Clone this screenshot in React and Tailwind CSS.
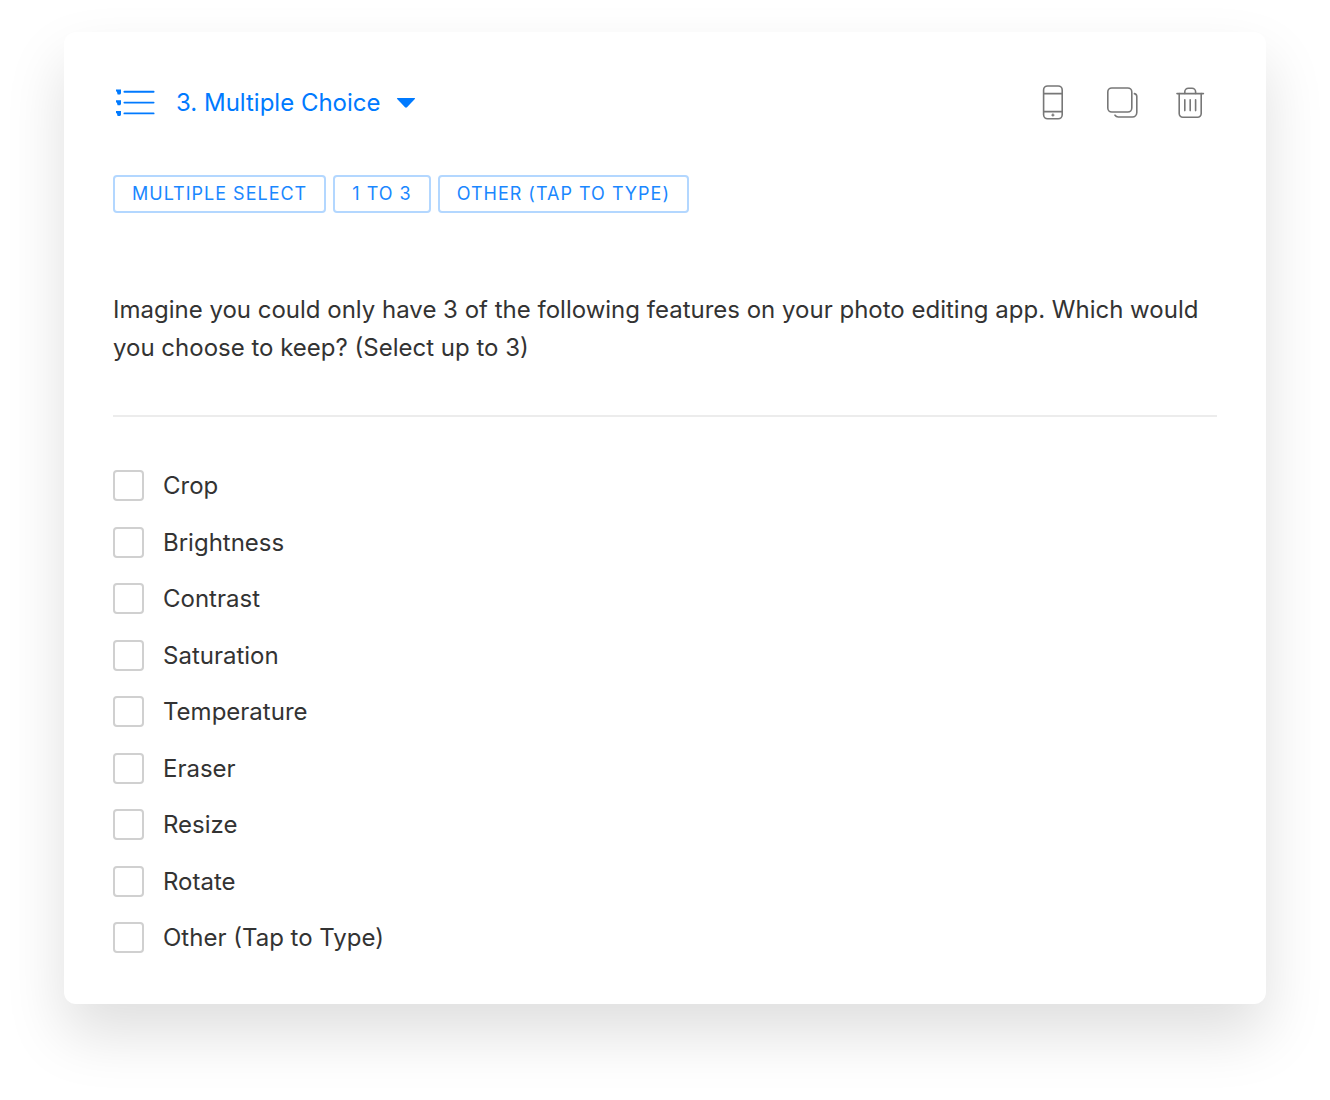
// App.jsx
const tags = ['Multiple Select', '1 to 3', 'Other (Tap to Type)'];

const options = [
  'Crop',
  'Brightness',
  'Contrast',
  'Saturation',
  'Temperature',
  'Eraser',
  'Resize',
  'Rotate',
  'Other (Tap to Type)',
];

function ListIcon() {
  return (
    <svg className="w-10 h-7 flex-shrink-0" viewBox="0 0 40 28" fill="currentColor" aria-hidden="true">
      <path d="M1 0.4h5v3.8L5.2 5.4H2.6L1.8 2.6H1zM1 11.2h5V15l-.8 1.2H2.6l-.8-2.8H1zM1 22h5v3.8L5.2 27H2.6l-.8-2.8H1z" />
      <path d="M9.4 2.7h29.2M9.4 13.6h29.2M9.4 24.4h29.2" stroke="currentColor" strokeWidth="1.9" strokeLinecap="round" />
    </svg>
  );
}

function PhoneIcon() {
  return (
    <svg className="w-8 h-9" viewBox="0 0 32 36" fill="none" stroke="currentColor" strokeWidth="1.6" aria-hidden="true">
      <rect x="6.6" y="1" width="18.6" height="32.8" rx="4" />
      <path d="M6.6 8.6h18.6M6.6 26.6h18.6" />
      <path d="M15.9 28.6v3M14.4 30.1h3" strokeWidth="1.3" />
    </svg>
  );
}

function CopyIcon() {
  return (
    <svg className="w-8 h-9" viewBox="0 0 32 36" fill="none" stroke="currentColor" strokeWidth="1.6" strokeLinecap="round" aria-hidden="true">
      <rect x="1.8" y="3" width="24" height="24" rx="4" />
      <path d="M28.4 8.6a3 3 0 0 1 2.4 3V27.6a4.4 4.4 0 0 1-4.4 4.4H12.4a4 4 0 0 1-3.4-1.8" />
    </svg>
  );
}

function TrashIcon() {
  return (
    <svg className="w-8 h-9" viewBox="0 0 32 36" fill="none" stroke="currentColor" strokeWidth="1.6" strokeLinecap="round" aria-hidden="true">
      <path d="M2 8.6h26.4" />
      <path d="M9.8 8.4V6.8A3.6 3.6 0 0 1 13.4 3.2h3.6a3.6 3.6 0 0 1 3.6 3.6V8.4" />
      <path d="M4.2 8.6v20a3.6 3.6 0 0 0 3.6 3.6h14.8a3.6 3.6 0 0 0 3.6-3.6v-20" />
      <path d="M9.8 14.8v10.8M15.2 14.8v10.8M20.6 14.8v10.8" />
    </svg>
  );
}

export default function App() {
  return (
    <main className="min-h-screen bg-white px-16 pt-8 pb-24 font-[Inter,sans-serif] text-[#333333]">
      <section className="rounded-xl bg-white px-[49px] pt-[51px] pb-[51px] shadow-[0_30px_60px_rgba(0,0,0,0.13)]">
        {/* Question type and actions */}
        <header className="flex items-center justify-between h-10">
          <div className="flex items-center pl-0.5 text-[#007aff]">
            <ListIcon />
            <select
              aria-label="Question type"
              className="ml-[21px] appearance-none bg-transparent text-2xl leading-10 outline-none"
            >
              <option>3. Multiple Choice</option>
            </select>
            <svg className="w-5 h-3 ml-[15px] pointer-events-none" viewBox="0 0 20 12" fill="currentColor" aria-hidden="true">
              <path d="M1.6 1h16.8q1.2 0 .4 1L11 10.2q-1 .9-2 0L1.2 2q-.8-1 .4-1z" />
            </svg>
          </div>
          <div className="flex items-center gap-[37px] pr-[10px] text-[#777777]">
            <button type="button" aria-label="Preview on phone"><PhoneIcon /></button>
            <button type="button" aria-label="Duplicate"><CopyIcon /></button>
            <button type="button" aria-label="Delete"><TrashIcon /></button>
          </div>
        </header>

        {/* Settings */}
        <div className="flex flex-wrap gap-[7px] mt-[52px]">
          {tags.map((tag) => (
            <button
              key={tag}
              type="button"
              className="h-[38px] px-[17px] border-2 border-[#b3d7ff] rounded-sm text-lg leading-none tracking-[1px] uppercase text-[#1a87ff]"
            >
              {tag}
            </button>
          ))}
        </div>

        {/* Question */}
        <fieldset>
          <legend className="pt-[78px] text-2xl leading-[38px]">
            Imagine you could only have 3 of the following features on your photo editing app. Which would
            you choose to keep? (Select up to 3)
          </legend>
          <hr className="mt-12 border-t-2 border-[#ececec]" />
          <ul className="mt-[53px] min-h-[483px] flex flex-col justify-between">
            {options.map((option) => (
              <li key={option}>
                <label className="flex items-center gap-[19px] text-2xl leading-[31px]">
                  <input
                    type="checkbox"
                    className="size-[31px] appearance-none rounded-sm border-2 border-[#d0d0d0] bg-white checked:bg-[#007aff]"
                  />
                  {option}
                </label>
              </li>
            ))}
          </ul>
        </fieldset>
      </section>
    </main>
  );
}
